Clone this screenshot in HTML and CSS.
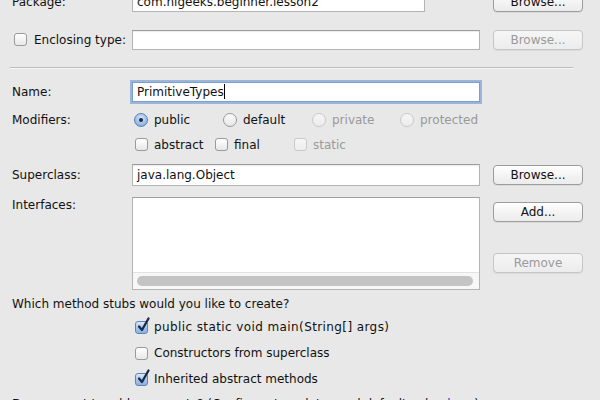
FILE: index.html
```html
<!DOCTYPE html>
<html>
<head>
<meta charset="utf-8">
<link rel="stylesheet" href="styles.css">
</head>
<body>
<div class="page">
  <div class="row r-package">
    <div class="label">Package:</div>
    <div class="field short">com.nigeeks.beginner.lesson2</div>
    <div class="btn">Browse...</div>
  </div>
  <div class="row r-enclosing">
    <div class="label check-label"><span class="cb"></span><span>Enclosing type:</span></div>
    <div class="field"></div>
    <div class="btn disabled">Browse...</div>
  </div>
  <div class="sep"></div>
  <div class="row r-name">
    <div class="label">Name:</div>
    <div class="field focus">PrimitiveTypes<span class="caret"></span></div>
  </div>
  <div class="row r-mod">
    <div class="label">Modifiers:</div>
    <div class="opts">
      <div class="opt o-public"><span class="radio on"></span>public</div>
      <div class="opt o-default"><span class="radio"></span>default</div>
      <div class="opt o-private dis"><span class="radio dis"></span>private</div>
      <div class="opt o-protected dis"><span class="radio dis"></span>protected</div>
    </div>
  </div>
  <div class="row r-mod2">
    <div class="label"></div>
    <div class="opts">
      <div class="opt o-abstract"><span class="cb"></span>abstract</div>
      <div class="opt o-final"><span class="cb"></span>final</div>
      <div class="opt o-static dis"><span class="cb dis"></span>static</div>
    </div>
  </div>
  <div class="row r-super">
    <div class="label">Superclass:</div>
    <div class="field tall">java.lang.Object</div>
    <div class="btn">Browse...</div>
  </div>
  <div class="row r-ifaces">
    <div class="label top">Interfaces:</div>
    <div class="list">
      <div class="list-body"></div>
      <div class="hscroll"><div class="thumb"></div></div>
    </div>
    <div class="btncol">
      <div class="btn">Add...</div>
      <div class="btn disabled">Remove</div>
    </div>
  </div>
  <div class="question">Which method stubs would you like to create?</div>
  <div class="stubs">
    <div class="opt stub stub-main"><span class="cb on"><svg viewBox="0 0 14 16" class="tick"><path d="M3 9.5 L6 13 L12.5 1.5" /></svg></span>public static void main(String[] args)</div>
    <div class="opt stub"><span class="cb"></span>Constructors from superclass</div>
    <div class="opt stub"><span class="cb on"><svg viewBox="0 0 14 16" class="tick"><path d="M3 9.5 L6 13 L12.5 1.5" /></svg></span>Inherited abstract methods</div>
  </div>
  <div class="comments">Do you want to add comments? (Configure templates and default value <span class="link">here</span>)</div>
</div>
</body>
</html>
```

FILE: styles.css
```css
html, body {
  margin: 0;
  padding: 0;
  background: #e8e8e8;
  overflow: hidden;
}
body {
  width: 600px;
  height: 400px;
  font-family: "DejaVu Sans", "Lucida Grande", sans-serif;
  font-size: 12px;
  color: #111;
}
.page {
  margin-top: -11px;
  padding: 0 17px 0 12px;
}
.row {
  display: grid;
  grid-template-columns: 107px 348px 90px;
  column-gap: 13px;
  align-items: center;
}
.r-package { height: 26px; }
.r-enclosing { height: 25px; margin-top: 12px; }
.r-name { height: 26px; margin-top: 10px; }
.r-mod { height: 25px; margin-top: 2px; }
.r-mod2 { height: 25px; }
.r-super { height: 26px; margin-top: 5px; }
.r-ifaces { align-items: start; margin-top: 9px; }

.label { white-space: nowrap; }
.label.top { line-height: 16px; }
.check-label {
  display: flex;
  align-items: center;
  gap: 7px;
  padding-left: 2px;
}

.field {
  height: 20px;
  box-sizing: border-box;
  background: #fff;
  border: 1px solid #b4b4b4;
  border-top-color: #9c9c9c;
  box-shadow: inset 0 1px 1px rgba(0,0,0,0.08);
  padding: 0 4px;
  line-height: 18px;
  font-size: 12px;
  white-space: nowrap;
  overflow: hidden;
}
.field.short { width: 293px; }
.field.tall { height: 22px; line-height: 20px; }
.field.focus {
  height: 20px;
  border-color: #7e9fcc;
  box-shadow: 0 0 0 2px rgba(128,166,214,0.75);
}
.caret {
  display: inline-block;
  width: 1px;
  height: 15px;
  background: #000;
  vertical-align: -3px;
}

.btn {
  height: 20px;
  box-sizing: border-box;
  border: 1px solid #9c9c9c;
  border-radius: 4px;
  background: linear-gradient(#ffffff, #f3f3f3 55%, #ececec);
  box-shadow: 0 1px 0 rgba(0,0,0,0.06);
  text-align: center;
  line-height: 18px;
  font-size: 12px;
  color: #111;
}
.btn.disabled {
  border-color: #c6c6c6;
  background: linear-gradient(#f6f6f6, #ececec);
  color: #9a9a9a;
}

.sep {
  margin: 15px 10px 0 -2px;
  height: 0;
  border-top: 1px solid #bdbdbd;
  border-bottom: 1px solid #f6f6f6;
}

.opts {
  grid-column: 2 / 4;
  display: flex;
  align-items: center;
  height: 100%;
}
.opt {
  display: flex;
  align-items: center;
  gap: 6px;
  white-space: nowrap;
}
.opt.dis { color: #9a9a9a; }
.o-public { margin-left: 2px; width: 89px; }
.o-default { width: 89px; }
.o-private { width: 88px; }
.o-abstract { margin-left: 3px; width: 80px; }
.o-final { width: 79px; }

.radio {
  width: 14px;
  height: 14px;
  box-sizing: border-box;
  border-radius: 50%;
  border: 1px solid #9a9a9a;
  background: linear-gradient(#fdfdfd, #e6e6e6);
  position: relative;
  flex: none;
}
.radio.dis { border-color: #c8c8c8; background: linear-gradient(#f6f6f6, #ececec); }
.radio.on {
  border-color: #5a7fb4;
  background: radial-gradient(circle at 50% 35%, #d8e8f8, #8fb6e4 70%, #6f9bd4);
}
.radio.on::after {
  content: "";
  position: absolute;
  left: 4px;
  top: 4px;
  width: 4px;
  height: 4px;
  border-radius: 50%;
  background: #1c2a44;
}

.cb {
  width: 13px;
  height: 13px;
  box-sizing: border-box;
  border-radius: 3px;
  border: 1px solid #9a9a9a;
  background: linear-gradient(#ffffff, #e8e8e8);
  position: relative;
  flex: none;
}
.cb.dis { border-color: #cacaca; background: linear-gradient(#f6f6f6, #ededed); }
.cb.on {
  border-color: #5f84b8;
  background: linear-gradient(#dbe9f8, #9fc2ea 60%, #8ab3e3);
}
.tick {
  position: absolute;
  left: 0px;
  top: -5px;
  width: 14px;
  height: 16px;
  overflow: visible;
}
.tick path {
  fill: none;
  stroke: #1b2a4a;
  stroke-width: 2.3;
  stroke-linecap: round;
  stroke-linejoin: round;
}

.list {
  height: 93px;
  box-sizing: border-box;
  border: 1px solid #b4b4b4;
  border-top-color: #a0a0a0;
  background: #fff;
  display: flex;
  flex-direction: column;
}
.list-body { flex: 1; }
.hscroll {
  height: 17px;
  border-top: 1px solid #e2e2e2;
  background: #f7f7f7;
  padding: 3px 6px 0 4px;
  box-sizing: border-box;
}
.thumb {
  height: 10px;
  border-radius: 5px;
  background: #c4c4c4;
}
.btncol {
  display: flex;
  flex-direction: column;
  gap: 31px;
  padding-top: 5px;
}

.question {
  margin-top: 6px;
  line-height: 16px;
  white-space: nowrap;
}
.stubs {
  margin-top: 2px;
  padding-left: 123px;
}
.stub {
  height: 26px;
}
.stub-main { letter-spacing: 0.4px; }
.comments {
  margin-top: 4px;
  line-height: 16px;
  white-space: nowrap;
}
.link { color: #1a3bd8; }
```
